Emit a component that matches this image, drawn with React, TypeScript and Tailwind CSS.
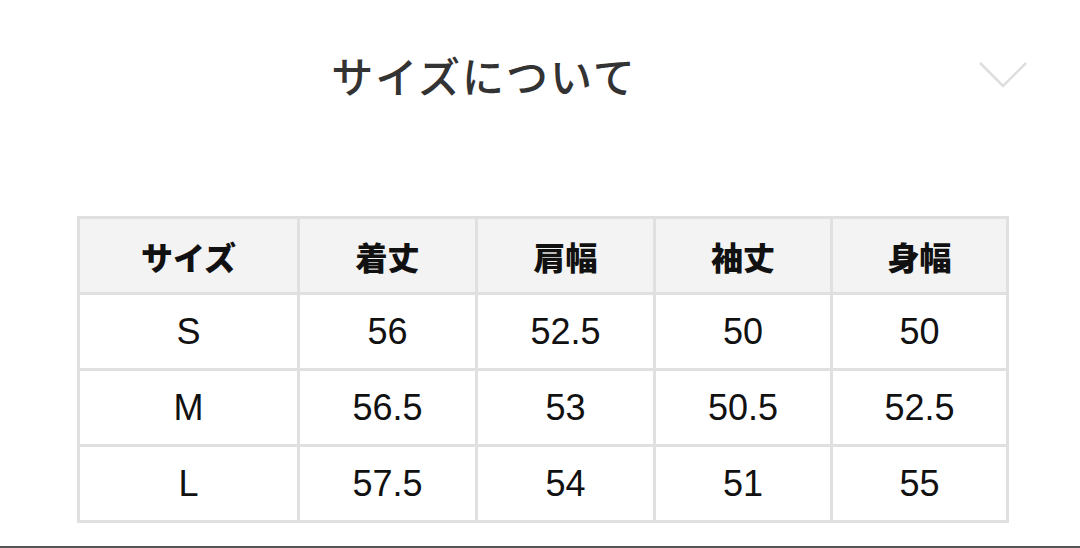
import React from "react";

const headers = ["サイズ", "着丈", "肩幅", "袖丈", "身幅"];
const rows = [
  ["S", "56", "52.5", "50", "50"],
  ["M", "56.5", "53", "50.5", "52.5"],
  ["L", "57.5", "54", "51", "55"],
];
const widths = ["w-[220px]", "w-[178px]", "w-[178px]", "w-[177px]", "w-[176px]"];

export default function App() {
  return (
    <div
      className="w-[1080px] h-[548px] bg-white relative overflow-hidden flex flex-col"
      style={{ fontFamily: '"Liberation Sans", "Noto Sans CJK JP", sans-serif' }}
    >
      <div className="flex items-center h-[150px]">
        <div
          className="w-[968px] text-center text-[42px] leading-none tracking-[2px] font-medium text-[#333]"
          style={{ fontFamily: '"Noto Sans CJK JP", sans-serif' }}
        >
          サイズについて
        </div>
        <svg className="ml-[10px]" width="50" height="30" viewBox="0 0 50 30" fill="none">
          <path d="M2 3 L25 26 L48 3" stroke="#dedede" strokeWidth="2.5" />
        </svg>
      </div>
      <div className="pl-[77px] pt-[66px]">
        <table className="border-collapse border-[3px] border-[#e0e0e0]">
          <thead>
            <tr className="bg-[#f3f3f3] h-[76px]">
              {headers.map((h, i) => (
                <th
                  key={h}
                  className={`${widths[i]} border-[3px] border-[#e0e0e0] p-0 text-center align-middle text-[32px] font-black text-[#111]`}
                  style={{ fontFamily: '"Noto Sans CJK JP", sans-serif' }}
                >
                  {h}
                </th>
              ))}
            </tr>
          </thead>
          <tbody>
            {rows.map((r) => (
              <tr key={r[0]} className="h-[76px]">
                {r.map((c, i) => (
                  <td
                    key={i}
                    className="border-[3px] border-[#e0e0e0] p-0 text-center align-middle text-[36px] font-normal text-[#111]"
                  >
                    {c}
                  </td>
                ))}
              </tr>
            ))}
          </tbody>
        </table>
      </div>
      <div className="absolute left-0 right-0 bottom-0 h-[2px] bg-[#555]" />
    </div>
  );
}
